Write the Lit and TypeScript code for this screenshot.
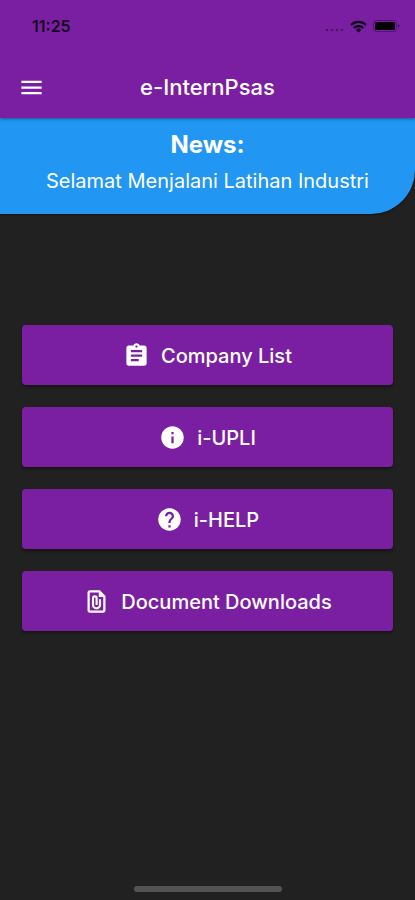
import { LitElement, html, css, svg } from "lit";
import { customElement, property } from "lit/decorators.js";

const icons = {
  clipboard: svg`<path fill="currentColor" d="M19 3h-4.180C14.4 1.84 13.3 1 12 1c-1.3 0-2.4.84-2.82 2H5c-1.1 0-2 .9-2 2v14c0 1.1.9 2 2 2h14c1.1 0 2-.9 2-2V5c0-1.1-.9-2-2-2zm-7 0c.55 0 1 .45 1 1s-.45 1-1 1-1-.45-1-1 .45-1 1-1zm2 14H7v-2h7v2zm3-4H7v-2h10v2zm0-4H7V7h10v2z"/>`,
  info: svg`<path fill="currentColor" d="M12 2C6.48 2 2 6.48 2 12s4.48 10 10 10 10-4.48 10-10S17.52 2 12 2zm1 15h-2v-6h2v6zm0-8h-2V7h2v2z"/>`,
  help: svg`<path fill="currentColor" d="M12 2C6.48 2 2 6.48 2 12s4.48 10 10 10 10-4.48 10-10S17.52 2 12 2zm1 17h-2v-2h2v2zm2.07-7.75l-.9.92C13.45 12.9 13 13.5 13 15h-2v-.5c0-1.1.45-2.1 1.17-2.83l1.24-1.26c.37-.36.59-.86.59-1.41 0-1.1-.9-2-2-2s-2 .9-2 2H8c0-2.21 1.79-4 4-4s4 1.79 4 4c0 .88-.36 1.68-.93 2.25z"/>`,
  file: svg`<path fill="currentColor" fill-rule="evenodd" d="M15 2H6c-1.1 0-2 .9-2 2v16c0 1.1.9 2 2 2h12c1.1 0 2-.9 2-2V7l-5-5zM6 20V4h8v4h4v12H6z"/><path fill="none" stroke="currentColor" stroke-width="1.9" d="M15.1 10v5a3.1 3.1 0 0 1-6.2 0V9a1.6 1.6 0 0 1 3.200 0v6"/>`,
};

type IconName = keyof typeof icons;

@customElement("menu-button")
class MenuButton extends LitElement {
  @property() icon: IconName = "info";
  @property() label = "";

  static styles = css`
    :host {
      display: block;
    }
    .button {
      display: flex;
      align-items: center;
      justify-content: center;
      gap: 11px;
      width: 100%;
      min-height: 60px;
      padding: 8px 16px;
      border: 0;
      border-radius: 4px;
      background: #7b1fa2;
      color: #fff;
      font: 500 20px/28px Inter, Roboto, sans-serif;
      box-shadow: 0 2px 3px rgba(0, 0, 0, 0.4);
      cursor: pointer;
    }
    .icon {
      flex: none;
      width: 27px;
      height: 27px;
    }
    .label {
      padding-top: 2px;
    }
  `;

  render() {
    return html`<button class="button" type="button">
      <svg class="icon" viewBox="0 0 24 24" aria-hidden="true">${icons[this.icon]}</svg>
      <span class="label">${this.label}</span>
    </button>`;
  }
}

@customElement("app-root")
class AppRoot extends LitElement {
  private items: { icon: IconName; label: string }[] = [
    { icon: "clipboard", label: "Company List" },
    { icon: "info", label: "i-UPLI" },
    { icon: "help", label: "i-HELP" },
    { icon: "file", label: "Document Downloads" },
  ];

  static styles = css`
    :host {
      display: flex;
      flex-direction: column;
      box-sizing: border-box;
      min-height: 100vh;
      background: #212121;
      color: #fff;
      font-family: Inter, Roboto, sans-serif;
    }
    .header {
      position: relative;
      background: #7b1fa2;
      box-shadow: 0 1px 3px rgba(0, 0, 0, 0.4);
    }
    .status {
      display: flex;
      align-items: center;
      justify-content: space-between;
      height: 52px;
      padding: 0 15px 0 32px;
      color: #14051f;
      font-size: 16px;
      font-weight: 600;
    }
    .indicators {
      display: flex;
      align-items: center;
      gap: 6px;
    }
    .bar {
      display: grid;
      grid-template-columns: 40px 1fr 40px;
      align-items: center;
      height: 62px;
      padding: 4px 11px 0;
    }
    .menu {
      display: grid;
      place-items: center;
      width: 40px;
      height: 40px;
      padding: 0;
      border: 0;
      background: none;
      color: #fff;
      cursor: pointer;
    }
    .title {
      margin: 0;
      text-align: center;
      font-size: 22px;
      line-height: 28px;
      font-weight: 500;
    }
    .news {
      padding: 11px 16px 17px;
      border-bottom-right-radius: 44px;
      background: #2196f3;
      text-align: center;
      box-shadow: 0 1px 2px rgba(0, 0, 0, 0.5);
    }
    .heading {
      margin: 0;
      font-size: 24px;
      line-height: 32px;
      font-weight: 700;
    }
    .message {
      margin: 4px 0 0;
      font-size: 20px;
      line-height: 32px;
    }
    .actions {
      display: flex;
      flex-direction: column;
      gap: 22px;
      padding: 111px 22px 32px;
    }
    .home {
      width: 148px;
      height: 6px;
      margin: auto auto 8px;
      border-radius: 3px;
      background: #535353;
    }
  `;

  render() {
    return html`
      <header class="header">
        <div class="status">
          <span>11:25</span>
          <span class="indicators">
            <svg width="19" height="14" viewBox="0 0 19 14" fill="#4f1469" aria-hidden="true">
              <circle cx="2" cy="11" r="1.3" /><circle cx="7" cy="11" r="1.3" />
              <circle cx="12" cy="11" r="1.3" /><circle cx="17" cy="11" r="1.3" />
            </svg>
            <svg width="17" height="13" viewBox="0 0 17 13" aria-hidden="true">
              <path fill="none" stroke="#0b0211" stroke-width="2.2" d="M1 5a10.6 10.6 0 0 1 15 0M3.8 8a6.7 6.7 0 0 1 9.4 0" />
              <path fill="#0b0211" d="M8.5 12.6 5.9 9.9a3.7 3.7 0 0 1 5.2 0z" />
            </svg>
            <svg width="27" height="12" viewBox="0 0 27 12" aria-hidden="true">
              <rect x=".5" y=".5" width="23" height="11" rx="3" fill="none" stroke="#4f1469" />
              <rect x="2" y="2" width="20" height="8" rx="1.5" fill="#050008" />
              <path fill="#4f1469" d="M25 4v4c1-.3 1.6-1.1 1.6-2S26 4.300 25 4z" />
            </svg>
          </span>
        </div>
        <div class="bar">
          <button class="menu" type="button" aria-label="Menu">
            <svg width="27" height="27" viewBox="0 0 24 24" aria-hidden="true">
              <path fill="currentColor" d="M3 18h18v-2H3v2zm0-5h18v-2H3v2zm0-7v2h18V6H3z" />
            </svg>
          </button>
          <h1 class="title">e-InternPsas</h1>
        </div>
      </header>
      <section class="news">
        <h2 class="heading">News:</h2>
        <p class="message">Selamat Menjalani Latihan Industri</p>
      </section>
      <main class="actions">
        ${this.items.map((i) => html`<menu-button .icon=${i.icon} .label=${i.label}></menu-button>`)}
      </main>
      <div class="home"></div>
    `;
  }
}
